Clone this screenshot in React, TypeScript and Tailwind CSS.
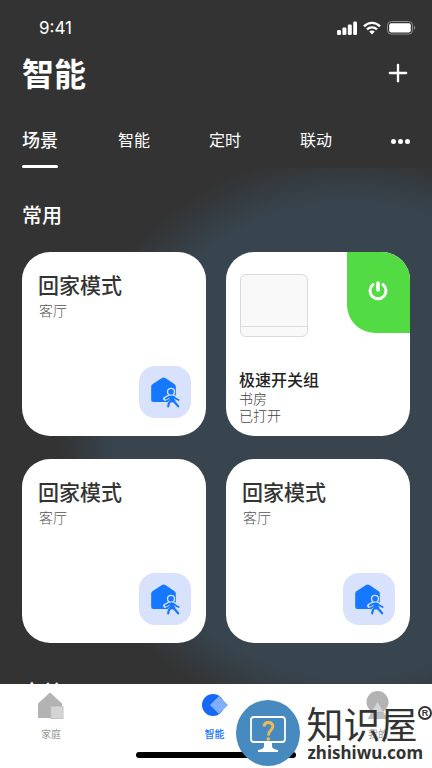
import { Plus } from "lucide-react";

const TABS = ["智能", "定时", "联动"];

const SCENES = [
  { id: 1, name: "回家模式", room: "客厅" },
  { id: 2, name: "回家模式", room: "客厅" },
  { id: 3, name: "回家模式", room: "客厅" },
];

const StatusIcons = () => (
  <div className="flex items-center gap-[6px] text-white">
    {/* signal */}
    <svg width="20" height="14" viewBox="0 0 20 14" fill="currentColor">
      <rect x="0" y="9" width="4" height="5" rx="1.2" />
      <rect x="5.4" y="6.5" width="4" height="7.5" rx="1.2" />
      <rect x="10.8" y="3.5" width="4" height="10.5" rx="1.2" />
      <rect x="16.2" y="0.5" width="3.8" height="13.5" rx="1.2" />
    </svg>
    {/* wifi */}
    <svg width="18" height="14" viewBox="0 0 18 14" fill="none" stroke="currentColor" strokeWidth="2.3">
      <path d="M1 5.4C5.4 0.8 12.6 0.8 17 5.4" />
      <path d="M4 8.4C6.8 5.6 11.2 5.6 14 8.4" />
      <path d="M6.2 10.6C7.8 9.2 10.2 9.2 11.8 10.6L9 13.6Z" fill="currentColor" stroke="none" />
    </svg>
    {/* battery */}
    <svg width="29" height="14" viewBox="0 0 29 14" fill="none">
      <rect x="0.5" y="0.5" width="25" height="12.6" rx="3.8" stroke="#8c8c8c" />
      <rect x="2.2" y="2.2" width="21.6" height="9.2" rx="2" fill="white" />
      <path d="M27 4.6C28.6 5.4 28.6 8.2 27 9Z" fill="#8c8c8c" />
    </svg>
  </div>
);

const SceneIcon = () => (
  <svg width="52" height="52" viewBox="0 0 52 52" fill="none" strokeLinecap="round" strokeLinejoin="round">
    <path
      d="M23 12.1Q24.7 10.7 26.4 12.1L35.6 18.2Q36.8 19 36.8 20.5V34Q36.8 36 34.8 36H14.2Q12.2 36 12.2 34V20.5Q12.2 19 13.4 18.2Z"
      fill="#1677ff"
    />
    <g stroke="#d9e2fd" strokeWidth="4">
      <path d="M26 32.8L30.2 30.4H34.6L37.4 32.8L39.6 33.8" />
      <path d="M32.6 31V35L30.4 37L29 40.2" />
    </g>
    <circle cx="32" cy="25.8" r="4.1" fill="#d9e2fd" />
    <circle cx="32" cy="25.8" r="2.8" fill="#1677ff" />
    <g stroke="#1677ff" strokeWidth="1.8">
      <path d="M26.8 32.6L30.4 30.6H34.6L37 32.8L39.6 34" />
      <path d="M34.2 31V35.2L36.6 37.2L39.2 40.4" strokeWidth="2.2" />
      <path d="M31.6 31L31.4 35.2L29.8 37.4L29.2 40.4" strokeWidth="2.2" />
      <path d="M32.8 31.2V34.8" strokeWidth="3.4" />
    </g>
  </svg>
);

const SceneCard = ({ name, room }: { name: string; room: string }) => (
  <button className="flex aspect-square flex-col rounded-[28px] bg-white pt-[18px] pr-[15px] pb-[18px] pl-[16px] text-left">
    <span className="text-[21px] leading-[28px] font-medium text-[#333]">{name}</span>
    <span className="pl-px text-[14px] leading-[24px] font-light text-[#555]">{room}</span>
    <span className="mt-auto self-end rounded-[16px] bg-[#d9e2fd]">
      <SceneIcon />
    </span>
  </button>
);

const SwitchCard = () => (
  <article className="flex aspect-square flex-col overflow-hidden rounded-[28px] bg-white">
    <div className="flex items-start justify-between pl-[14px]">
      <div className="mt-[22px] flex h-[63px] w-[68px] flex-col justify-end rounded-[6px] border border-[#d9d9d9] bg-[#f9f9f9]">
        <div className="h-[10px] border-t border-[#dedede]" />
      </div>
      <button
        aria-label="开关"
        className="flex h-[81px] w-[63px] items-center justify-center rounded-bl-[28px] bg-[#52db43] pr-[2px] pb-[4px]"
      >
        <svg width="22" height="22" viewBox="0 0 22 22" fill="none" stroke="white" strokeWidth="3" strokeLinecap="round">
          <path d="M6 4.6A8 8 0 1 0 16 4.6" />
          <path d="M11 3V10" strokeWidth="3.6" />
        </svg>
      </button>
    </div>
    <div className="mt-auto flex flex-col px-[13px] pb-[12px]">
      <h3 className="pb-px text-[16px] leading-[20px] font-medium text-[#222]">极速开关组</h3>
      <p className="text-[14px] leading-[17px] font-light text-[#444]">书房</p>
      <p className="text-[14px] leading-[17px] font-light text-[#444]">已打开</p>
    </div>
  </article>
);

const BottomNav = () => (
  <nav className="relative flex h-[84px] shrink-0 items-start justify-between bg-white pt-[7px] pr-[41px] pl-[38px] text-[10px] leading-[14px] text-[#999]">
    <a href="#home" className="flex w-[26px] flex-col items-center gap-[8px]">
      <svg width="26" height="28" viewBox="0 0 26 28">
        <path d="M12 1.5L24 12.5V27H0V12.5Z" fill="#b3b3b3" />
        <rect x="13" y="15.5" width="12" height="12" fill="#d4d4d4" stroke="#c4c4c4" />
      </svg>
      家庭
    </a>
    <a href="#smart" className="flex w-[26px] flex-col items-center gap-[8px] font-medium text-[#1677ff]">
      <svg width="26" height="28" viewBox="0 0 26 28">
        <circle cx="11" cy="14" r="11" fill="#1769f5" />
        <path d="M17 5L26 14L17 23L8 14Z" fill="#80aef9" />
      </svg>
      智能
    </a>
    <a href="#mine" className="flex w-[26px] flex-col items-center gap-[8px]">
      <svg width="26" height="28" viewBox="0 0 26 28">
        <path d="M12.5 10L22.5 28H2.5Z" fill="#bdbdbd" />
        <circle cx="12.5" cy="11" r="11" fill="#b3b3b3" />
        <path d="M12.5 11L18.5 21H6.5Z" fill="#d4d4d4" />
      </svg>
      我的
    </a>
    <div className="absolute bottom-[10px] left-1/2 h-[6px] w-[160px] -translate-x-1/2 rounded-full bg-black" />
  </nav>
);

const Watermark = () => (
  <div className="pointer-events-none absolute right-0 bottom-[2px] flex items-start">
    <svg width="64" height="66" viewBox="0 0 64 66" fill="none">
      <ellipse cx="32" cy="33" rx="32" ry="33" fill="#478ac0" />
      <rect x="15" y="17" width="34" height="25" rx="3" stroke="white" strokeWidth="1.8" />
      <path d="M28 42H36V46Q36 49 42 50V52H22V50Q28 49 28 46Z" fill="white" />
      <path d="M28 26.5Q28.4 22.6 32.4 22.6Q36.8 22.6 36.8 26.6Q36.8 29 34.2 31Q32.4 32.6 32.4 35.6" stroke="#edba54" strokeWidth="3" />
      <circle cx="32.4" cy="39" r="1.8" fill="#edba54" />
    </svg>
    <div className="mt-[3px] ml-[6px] flex flex-col text-[#333]">
      <span className="text-[37px] leading-[40px]">知识屋</span>
      <span className="pl-px font-['Noto_Sans','Noto_Sans_CJK_SC',sans-serif] text-[17px] leading-[20px] font-bold">zhishiwu.com</span>
    </div>
    <span className="mt-[6px] -ml-[5px] flex size-[14px] items-center justify-center rounded-full border-2 border-[#333] font-['Liberation_Sans',sans-serif] text-[9px] leading-none font-bold text-[#333]">
      R
    </span>
  </div>
);

const App = () => {
  return (
    <div className="relative flex h-screen flex-col overflow-hidden bg-[#333] font-['Noto_Sans_CJK_SC',sans-serif] text-white">
      <div className="flex h-[56px] shrink-0 items-center justify-between pr-[16px] pl-[39px]">
        <span className="font-['Inter','Noto_Sans_CJK_SC',sans-serif] text-[17px] leading-[20px]">9:41</span>
        <StatusIcons />
      </div>

      <header className="flex h-[34px] shrink-0 items-center justify-between pr-[20px] pl-[22px]">
        <h1 className="pb-[2px] text-[32px] leading-[36px] font-bold">智能</h1>
        <button aria-label="添加">
          <Plus size={28} strokeWidth={2} />
        </button>
      </header>

      <div className="mt-[34px] flex h-[44px] shrink-0 items-start pr-[22px] pl-[22px] text-[16px] leading-[30px]">
        <button className="mr-[60px] flex flex-col items-start text-[18px] font-medium">
          场景
          <span className="mt-[11px] h-[3px] w-[36px] rounded-full bg-white" />
        </button>
        <div className="flex gap-[59px]">
          {TABS.map((tab) => (
            <button key={tab}>{tab}</button>
          ))}
        </div>
        <button aria-label="更多" className="mt-[15px] ml-auto flex gap-[2px]">
          <span className="size-[5px] rounded-full bg-white" />
          <span className="size-[5px] rounded-full bg-white" />
          <span className="size-[5px] rounded-full bg-white" />
        </button>
      </div>

      <main className="min-h-0 flex-1 overflow-hidden bg-[radial-gradient(circle_at_350px_272px,#38454f_235px,#333_290px)] px-[22px] pt-[32px]">
        <h2 className="text-[20px] leading-[30px] font-medium">常用</h2>
        <div className="mt-[22px] grid grid-cols-2 gap-x-[20px] gap-y-[23px]">
          <SceneCard name={SCENES[0].name} room={SCENES[0].room} />
          <SwitchCard />
          {SCENES.slice(1).map((scene) => (
            <SceneCard key={scene.id} name={scene.name} room={scene.room} />
          ))}
        </div>
        <h2 className="mt-[34px] text-[20px] leading-[30px] font-medium">家单</h2>
      </main>

      <BottomNav />
      <Watermark />
    </div>
  );
};

export default App;
